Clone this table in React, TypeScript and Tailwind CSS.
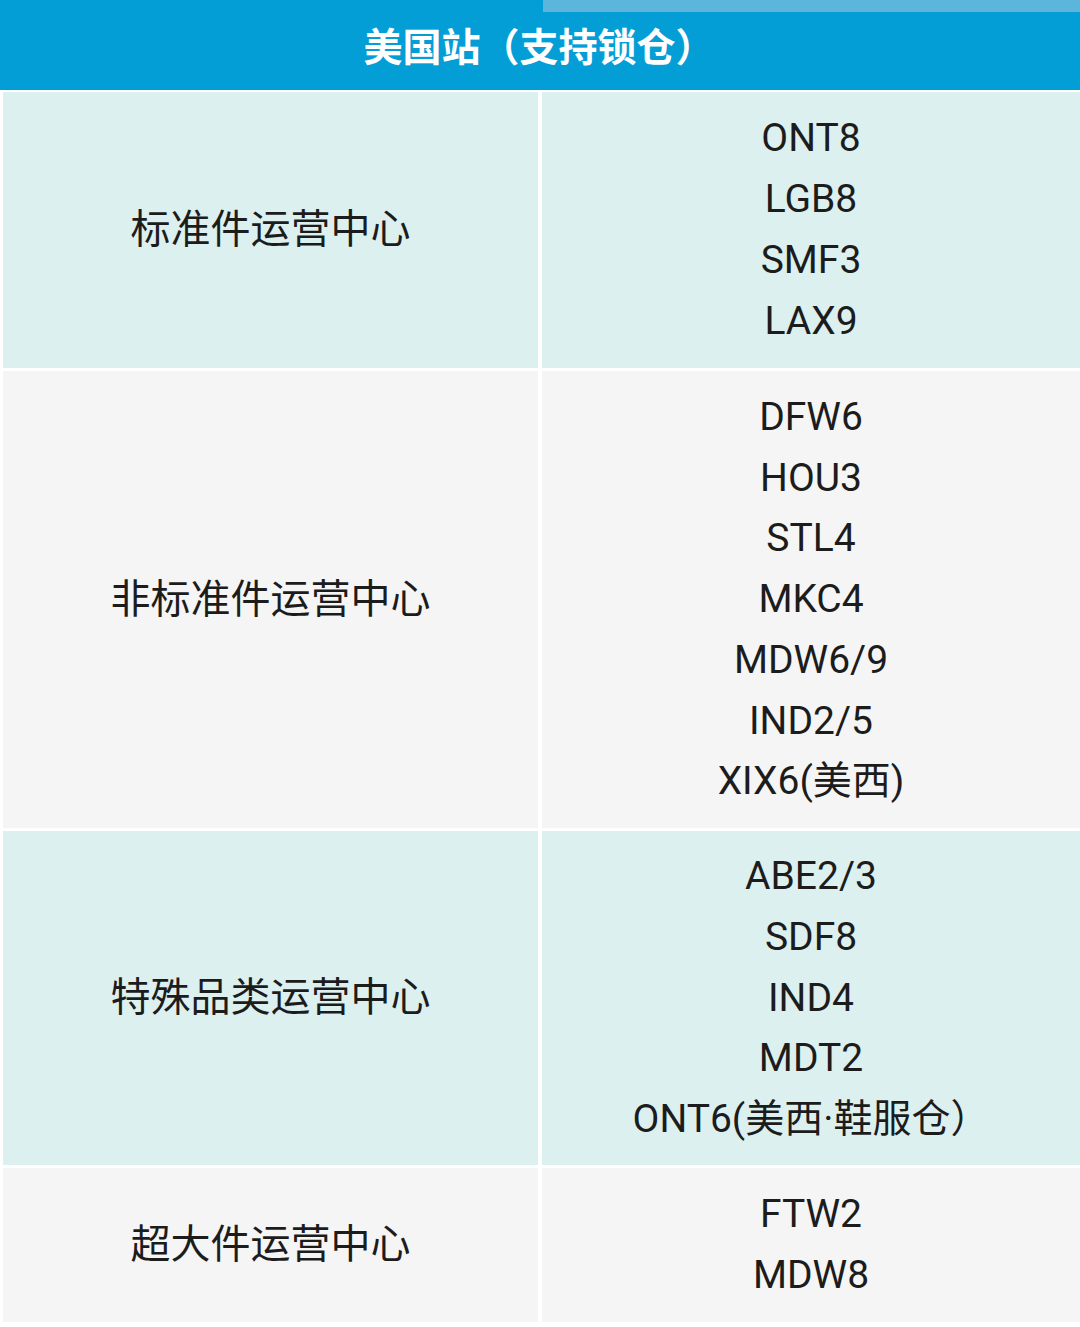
const rows = [
  { name: "标准件运营中心", codes: ["ONT8", "LGB8", "SMF3", "LAX9"], tint: true, h: "h-[276px]" },
  {
    name: "非标准件运营中心",
    codes: ["DFW6", "HOU3", "STL4", "MKC4", "MDW6/9", "IND2/5", "XIX6(美西)"],
    tint: false,
    h: "h-[457px]",
  },
  {
    name: "特殊品类运营中心",
    codes: ["ABE2/3", "SDF8", "IND4", "MDT2", "ONT6(美西·鞋服仓）"],
    tint: true,
    h: "h-[334px]",
  },
  { name: "超大件运营中心", codes: ["FTW2", "MDW8"], tint: false, h: "h-[154px]" },
];

export default function App() {
  return (
    <div
      className="w-[1080px] h-[1327px] bg-white text-[#1c1c1c]"
      style={{ fontFamily: "Roboto, 'Noto Sans CJK SC', sans-serif" }}
    >
      {/* header */}
      <div className="relative h-[90px] bg-[#039ed6] flex items-center justify-center">
        <div className="absolute top-0 right-0 w-[537px] h-[12px] bg-[#5cb5da]" />
        <h1 className="text-[39px] font-bold text-white pt-[6px] pr-[2px]">
          美国站（支持锁仓）
        </h1>
      </div>

      <div className="flex flex-col gap-[3px] pt-[2px] pl-[3px]">
        {rows.map((row) => (
          <div key={row.name} className={`flex gap-[4px] ${row.h}`}>
            <div
              className={`w-[535px] flex items-center justify-center text-[40px] ${
                row.tint ? "bg-[#ddf0f0]" : "bg-[#f5f5f5]"
              }`}
            >
              {row.name}
            </div>
            <div
              className={`flex-1 flex flex-col items-center justify-center text-[39px] leading-[60.8px] ${
                row.tint ? "bg-[#ddf0f0]" : "bg-[#f5f5f5]"
              }`}
            >
              {row.codes.map((c) => (
                <div key={c}>{c}</div>
              ))}
            </div>
          </div>
        ))}
      </div>
    </div>
  );
}
